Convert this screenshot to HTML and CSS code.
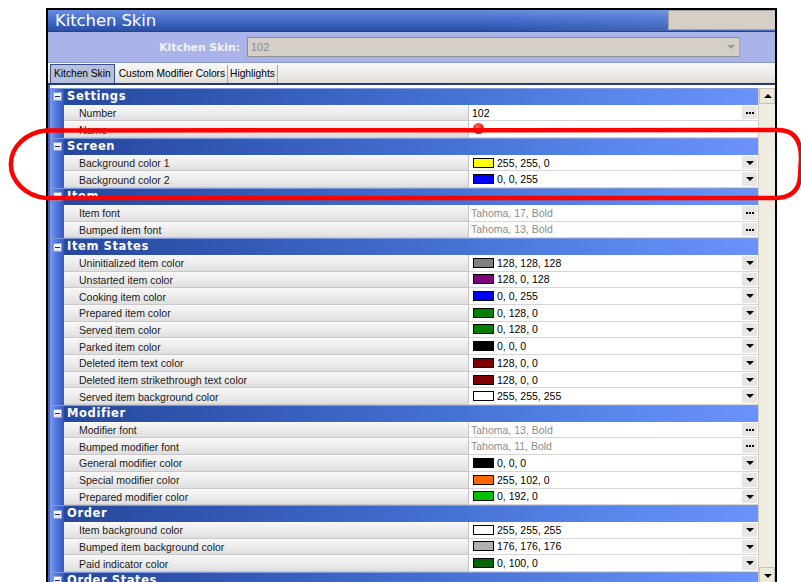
FILE: index.html
```html
<!DOCTYPE html>
<html>
<head>
<meta charset="utf-8">
<title>Kitchen Skin</title>
<link rel="stylesheet" href="styles.css">
</head>
<body>
<div class="window">
  <div class="titlebar">
    <span class="title">Kitchen Skin</span>
    <span class="title-box"></span>
  </div>
  <div class="picker">
    <span class="picker-label">Kitchen Skin:</span>
    <div class="combo"><span class="combo-text">102</span><span class="combo-arrow"></span></div>
  </div>
  <div class="tabs">
    <span class="tab active">Kitchen Skin</span>
    <span class="tab">Custom Modifier Colors</span>
    <span class="tab">Highlights</span>
  </div>
  <div class="gridwrap">
    <div class="grid">
      <div class="row cat"><span class="gut"><i class="minus"></i></span><span class="cat-name">Settings</span></div>
      <div class="row"><span class="gut"></span><span class="lbl">Number</span><span class="val">102</span><span class="btn dots"></span></div>
      <div class="row"><span class="gut"></span><span class="lbl">Name</span><span class="val"><i class="err"></i></span><span class="btn none"></span></div>

      <div class="row cat"><span class="gut"><i class="minus"></i></span><span class="cat-name">Screen</span></div>
      <div class="row"><span class="gut"></span><span class="lbl">Background color 1</span><span class="val"><i class="sw" style="background:rgb(255,255,0)"></i>255, 255, 0</span><span class="btn drop"></span></div>
      <div class="row"><span class="gut"></span><span class="lbl">Background color 2</span><span class="val"><i class="sw" style="background:rgb(0,0,255)"></i>0, 0, 255</span><span class="btn drop"></span></div>

      <div class="row cat"><span class="gut"><i class="minus"></i></span><span class="cat-name">Item</span></div>
      <div class="row"><span class="gut"></span><span class="lbl">Item font</span><span class="val ro">Tahoma, 17, Bold</span><span class="btn dots"></span></div>
      <div class="row"><span class="gut"></span><span class="lbl">Bumped item font</span><span class="val ro">Tahoma, 13, Bold</span><span class="btn dots"></span></div>

      <div class="row cat"><span class="gut"><i class="minus"></i></span><span class="cat-name">Item States</span></div>
      <div class="row"><span class="gut"></span><span class="lbl">Uninitialized item color</span><span class="val"><i class="sw" style="background:rgb(128,128,128)"></i>128, 128, 128</span><span class="btn drop"></span></div>
      <div class="row"><span class="gut"></span><span class="lbl">Unstarted item color</span><span class="val"><i class="sw" style="background:rgb(128,0,128)"></i>128, 0, 128</span><span class="btn drop"></span></div>
      <div class="row"><span class="gut"></span><span class="lbl">Cooking item color</span><span class="val"><i class="sw" style="background:rgb(0,0,255)"></i>0, 0, 255</span><span class="btn drop"></span></div>
      <div class="row"><span class="gut"></span><span class="lbl">Prepared item color</span><span class="val"><i class="sw" style="background:rgb(0,128,0)"></i>0, 128, 0</span><span class="btn drop"></span></div>
      <div class="row"><span class="gut"></span><span class="lbl">Served item color</span><span class="val"><i class="sw" style="background:rgb(0,128,0)"></i>0, 128, 0</span><span class="btn drop"></span></div>
      <div class="row"><span class="gut"></span><span class="lbl">Parked item color</span><span class="val"><i class="sw" style="background:rgb(0,0,0)"></i>0, 0, 0</span><span class="btn drop"></span></div>
      <div class="row"><span class="gut"></span><span class="lbl">Deleted item text color</span><span class="val"><i class="sw" style="background:rgb(128,0,0)"></i>128, 0, 0</span><span class="btn drop"></span></div>
      <div class="row"><span class="gut"></span><span class="lbl">Deleted item strikethrough text color</span><span class="val"><i class="sw" style="background:rgb(128,0,0)"></i>128, 0, 0</span><span class="btn drop"></span></div>
      <div class="row"><span class="gut"></span><span class="lbl">Served item background color</span><span class="val"><i class="sw" style="background:rgb(255,255,255)"></i>255, 255, 255</span><span class="btn drop"></span></div>

      <div class="row cat"><span class="gut"><i class="minus"></i></span><span class="cat-name">Modifier</span></div>
      <div class="row"><span class="gut"></span><span class="lbl">Modifier font</span><span class="val ro">Tahoma, 13, Bold</span><span class="btn dots"></span></div>
      <div class="row"><span class="gut"></span><span class="lbl">Bumped modifier font</span><span class="val ro">Tahoma, 11, Bold</span><span class="btn dots"></span></div>
      <div class="row"><span class="gut"></span><span class="lbl">General modifier color</span><span class="val"><i class="sw" style="background:rgb(0,0,0)"></i>0, 0, 0</span><span class="btn drop"></span></div>
      <div class="row"><span class="gut"></span><span class="lbl">Special modifier color</span><span class="val"><i class="sw" style="background:rgb(255,102,0)"></i>255, 102, 0</span><span class="btn drop"></span></div>
      <div class="row"><span class="gut"></span><span class="lbl">Prepared modifier color</span><span class="val"><i class="sw" style="background:rgb(0,192,0)"></i>0, 192, 0</span><span class="btn drop"></span></div>

      <div class="row cat"><span class="gut"><i class="minus"></i></span><span class="cat-name">Order</span></div>
      <div class="row"><span class="gut"></span><span class="lbl">Item background color</span><span class="val"><i class="sw" style="background:rgb(255,255,255)"></i>255, 255, 255</span><span class="btn drop"></span></div>
      <div class="row"><span class="gut"></span><span class="lbl">Bumped item background color</span><span class="val"><i class="sw" style="background:rgb(176,176,176)"></i>176, 176, 176</span><span class="btn drop"></span></div>
      <div class="row"><span class="gut"></span><span class="lbl">Paid indicator color</span><span class="val"><i class="sw" style="background:rgb(0,100,0)"></i>0, 100, 0</span><span class="btn drop"></span></div>

      <div class="row cat"><span class="gut"><i class="minus"></i></span><span class="cat-name">Order States</span></div>
    </div>
    <div class="scrollbar">
      <span class="sb-btn up"></span>
      <span class="sb-track"></span>
      <span class="sb-btn down"></span>
    </div>
  </div>
</div>

<svg class="markup" width="801" height="582" viewBox="0 0 801 582">
  <path d="M46 130.5 L778 130 Q801 130 801 158 L800 176 Q799 198 774 198 L46 198 A40 34 0 0 1 46 130.5 Z"
        fill="none" stroke="#ff0000" stroke-width="4.5"/>
</svg>
</body>
</html>
```

FILE: styles.css
```css
html, body {
  margin: 0;
  padding: 0;
  background: #ffffff;
  width: 801px;
  height: 582px;
  overflow: hidden;
  font-family: "Liberation Sans", Arial, sans-serif;
  position: relative;
}

.window {
  margin: 8px 0 0 46px;
  width: 727px;
  height: 600px;
  border: 2px solid #000;
  border-bottom: none;
  display: flex;
  flex-direction: column;
  background: #aab4e8;
}

/* caption */
.titlebar {
  height: 22px;
  display: flex;
  align-items: center;
  justify-content: space-between;
  background: linear-gradient(90deg, rgba(255,255,255,0) 60%, rgba(140,170,240,0.35) 100%),
              linear-gradient(180deg, #6a8ede 0%, #4870cc 40%, #3760bd 70%, #2b4e9f 100%);
  border-bottom: 1px solid #24448e;
  box-sizing: border-box;
}
.title {
  color: #fff;
  font-family: "DejaVu Sans", Verdana, sans-serif;
  font-size: 16.5px;
  padding-left: 7px;
  letter-spacing: -0.1px;
}
.title-box {
  width: 107px;
  height: 20px;
  align-self: flex-start;
  background: #d4d0c8;
  border: 1px solid #a5a39c;
  border-right: none;
  box-sizing: border-box;
}

/* record picker */
.picker {
  height: 31px;
  display: flex;
  align-items: center;
  background: #aab4e8;
  border-bottom: 1px solid #8c98cc;
  box-sizing: border-box;
}
.picker-label {
  width: 192px;
  text-align: right;
  color: #f2f4fc;
  font-family: "DejaVu Sans", Verdana, sans-serif;
  font-weight: bold;
  font-size: 10.8px;
  margin-right: 7px;
}
.combo {
  width: 493px;
  height: 20px;
  box-sizing: border-box;
  background: #d4d0c8;
  border: 1px solid #8f8f8f;
  border-right-color: #a8a8a8;
  display: flex;
  align-items: center;
  justify-content: space-between;
  margin-top: -1px;
}
.combo-text {
  color: #8a8a8a;
  font-size: 11px;
  padding-left: 3px;
}
.combo-arrow {
  width: 0;
  height: 0;
  border-left: 4px solid transparent;
  border-right: 4px solid transparent;
  border-top: 4px solid #9a9a9a;
  margin-right: 4px;
}

/* tab strip */
.tabs {
  height: 22px;
  box-sizing: border-box;
  display: flex;
  align-items: flex-end;
  padding-left: 2px;
  background: linear-gradient(180deg, #f8f8f6 0%, #ecebe6 60%, #dddcd6 100%);
  border-bottom: 2px solid #223a78;
}
.tab {
  height: 18px;
  line-height: 18px;
  font-size: 10.2px;
  color: #000;
  padding: 0 2px 0 2px;
  border-right: 1px solid #a8a8a8;
  box-sizing: border-box;
}
.tab.active {
  background: #b6c0da;
  border: 1px solid #3c4c88;
  border-bottom: none;
  padding: 0 3px;
  height: 19px;
  margin-right: 2px;
}

/* property grid */
.gridwrap {
  flex: 1;
  display: flex;
  background: #fff;
  border-left: 2px solid #4c5fae;
  padding-top: 3px;
}
.grid {
  width: 708px;
  display: flex;
  flex-direction: column;
}
.row {
  height: 16.7px;
  display: flex;
  flex: none;
  box-sizing: border-box;
  font-size: 10.5px;
  line-height: 14px;
}
.gut {
  width: 14px;
  flex: none;
  background: linear-gradient(90deg, #7c9cf0 0%, #5378dc 45%, #3558bd 100%);
  display: flex;
  align-items: center;
  justify-content: center;
}
.minus {
  width: 9px;
  height: 9px;
  box-sizing: border-box;
  border: 1px solid #8aa0d8;
  background: linear-gradient(180deg, #ffffff 0%, #dfe4f2 100%) ;
  position: relative;
}
.minus::after {
  content: "";
  position: absolute;
  left: 1px;
  right: 1px;
  top: 3px;
  height: 1px;
  background: #1c2f6c;
}
.cat {
  background: linear-gradient(90deg, #26479a 0%, #3258b4 25%, #4470d2 55%, #5a86ec 80%, #6a92fa 100%);
  border-top: 1px solid #7d98dc;
}
.cat-name {
  color: #fff;
  font-family: "DejaVu Sans", Verdana, sans-serif;
  font-weight: bold;
  font-size: 11.5px;
  letter-spacing: 0.6px;
  padding-left: 3px;
  line-height: 15px;
}
.lbl {
  width: 404px;
  flex: none;
  display: flex;
  align-items: center;
  padding-left: 15px;
  box-sizing: border-box;
  color: #1a1a1a;
  background: linear-gradient(180deg, #f6f6f6 0%, #ececec 50%, #dedede 100%);
  border-top: 1px solid #fbfbfb;
  border-bottom: 1px solid #c9c9c9;
  white-space: nowrap;
}
.val {
  flex: 1;
  display: flex;
  align-items: center;
  padding-left: 3px;
  background: #fff;
  border-left: 1px solid #c4c4c4;
  border-bottom: 1px solid #d6d6d6;
  color: #000;
  white-space: nowrap;
}
.val.ro {
  color: #8c8c8c;
  padding-left: 2px;
}
.sw {
  width: 21px;
  height: 10px;
  box-sizing: border-box;
  border: 1px solid #000;
  margin-left: 1px;
  margin-right: 3px;
  flex: none;
}
.err {
  width: 11px;
  height: 11px;
  border-radius: 50%;
  background: radial-gradient(circle at 40% 35%, #ff6a6a 0%, #e8141a 60%, #b40000 100%);
  margin-left: 1px;
  margin-top: -1px;
}
.btn {
  width: 17px;
  flex: none;
  background: #fff;
  border-bottom: 1px solid #d6d6d6;
  box-sizing: border-box;
  position: relative;
}
.btn.dots::before,
.btn.drop::before {
  content: "";
  position: absolute;
  left: 1px;
  right: 1px;
  top: 1px;
  bottom: 1px;
  background: #e6e6e4;
}
.btn.dots::after {
  content: "";
  position: absolute;
  left: 5px;
  top: 7px;
  width: 2px;
  height: 2px;
  background: #000;
  box-shadow: 3px 0 0 #000, 6px 0 0 #000;
}
.btn.drop::after {
  content: "";
  position: absolute;
  left: 5px;
  top: 6px;
  width: 0;
  height: 0;
  border-left: 4px solid transparent;
  border-right: 4px solid transparent;
  border-top: 4px solid #000;
}

/* vertical scrollbar */
.scrollbar {
  width: 17px;
  display: flex;
  flex-direction: column;
  background: repeating-conic-gradient(#e6e3d6 0% 25%, #f8f7f2 0% 50%) 0 0 / 2px 2px;
  border-left: 1px solid #d0cdc0;
  height: 495px;
  box-sizing: border-box;
}
.sb-btn {
  height: 16px;
  flex: none;
  background: #ece9d8;
  border: 1px solid #c8c4b4;
  box-sizing: border-box;
  position: relative;
}
.sb-btn::after {
  content: "";
  position: absolute;
  left: 4px;
  width: 0;
  height: 0;
  border-left: 4px solid transparent;
  border-right: 4px solid transparent;
}
.sb-btn.up::after {
  top: 5px;
  border-bottom: 4px solid #000;
}
.sb-btn.down::after {
  top: 6px;
  border-top: 4px solid #000;
}
.sb-track {
  flex: 1;
}

/* hand-drawn highlight on top of the form */
.markup {
  position: absolute;
  left: 0;
  top: 0;
  pointer-events: none;
}
```
